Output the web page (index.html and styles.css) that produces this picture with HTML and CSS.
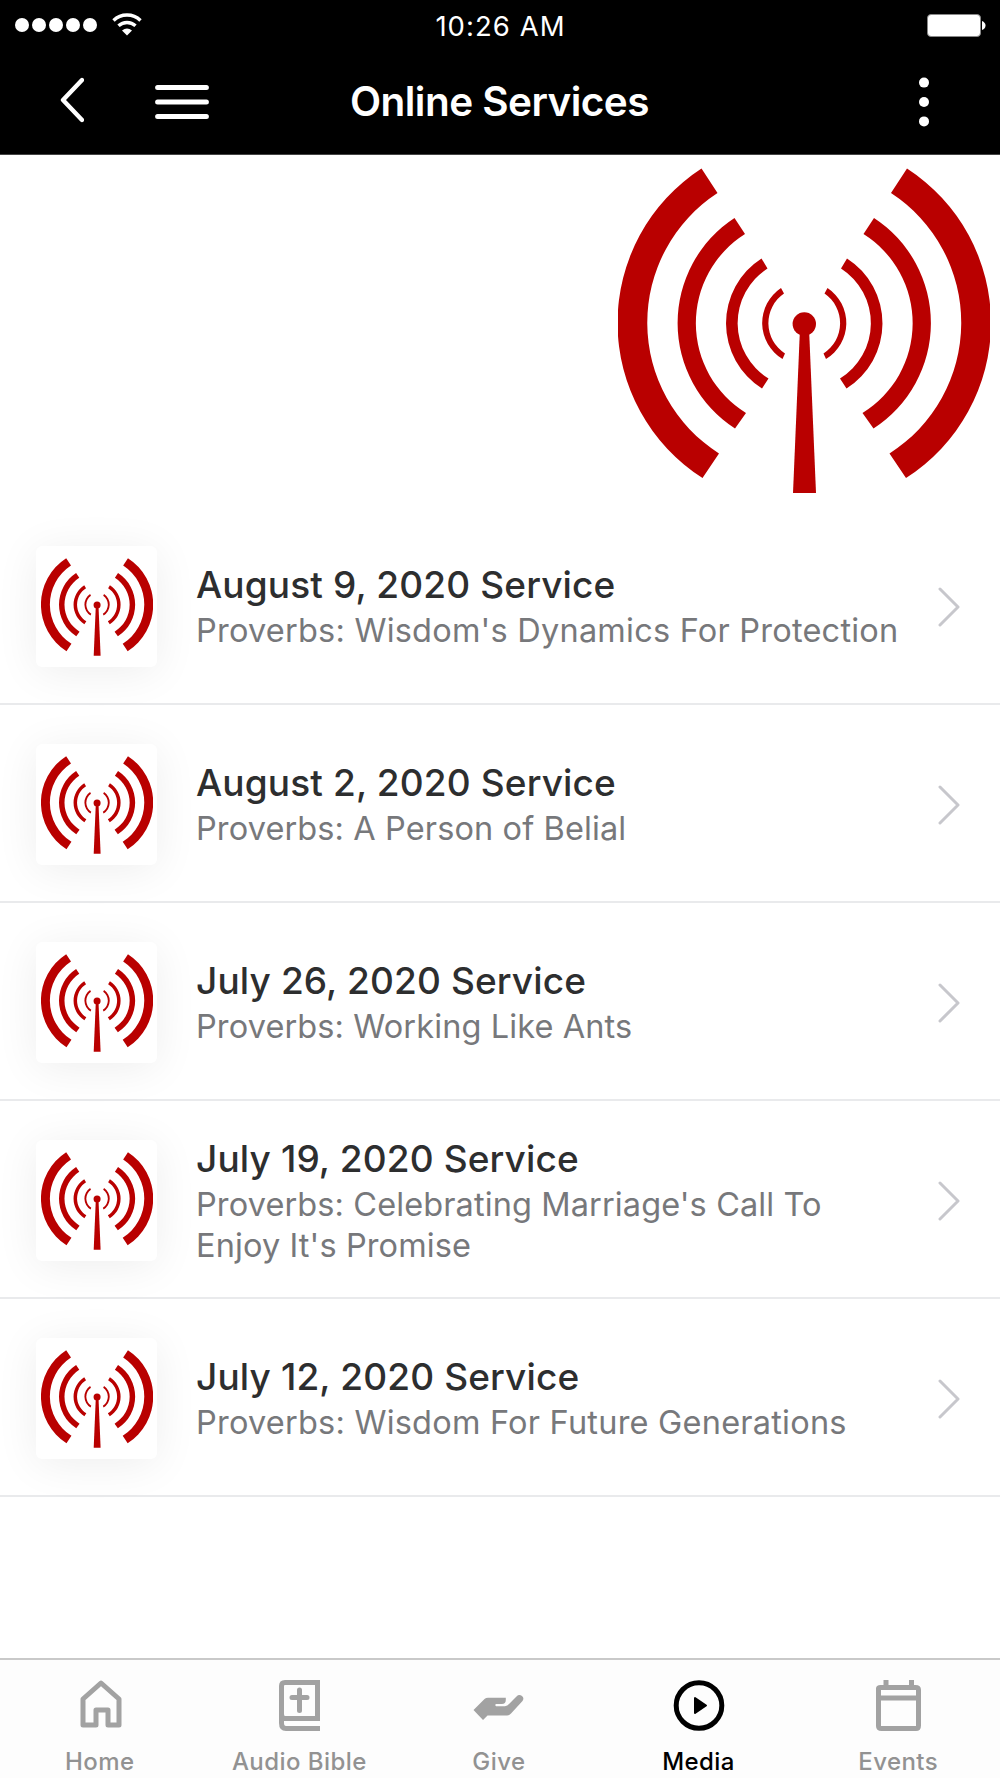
FILE: index.html
```html
<!DOCTYPE html>
<html lang="en">
<head>
<meta charset="utf-8">
<title>Online Services</title>
<link rel="stylesheet" href="styles.css">
</head>
<body>
<svg class="defs" width="0" height="0" aria-hidden="true">
  <symbol id="antenna" viewBox="0 0 372 326">
    <g id="waves-left">
      <path d="M83.500 0.500A184 184 0 0 0 84.500 310L101 285.500A155 155 0 0 1 99.500 25Z"/>
      <path d="M116.500 50A125.500 125.500 0 0 0 117 260.500L128 245A105.500 105.500 0 0 1 127 66Z"/>
      <path d="M143.500 90.500A77 77 0 0 0 144 220.500L150.500 210.500A65 65 0 0 1 149.500 100.500Z"/>
      <path d="M163 120A42 42 0 0 0 164.500 191L167 185.500A36 36 0 0 1 166 125.500Z"/>
    </g>
    <use href="#waves-left" transform="matrix(-1 0 0 1 372.500 0)"/>
    <circle cx="186.300" cy="156" r="11.700"/>
    <path d="M182 160H191L198 325H175Z"/>
  </symbol>
</svg>
<div class="screen">
  <header class="top">
    <div class="status">
      <div class="signal">
        <i></i><i></i><i></i><i></i><i></i>
        <svg class="wifi" width="30" height="24" viewBox="0 0 30 24"><path d="M1.500 7.500A19.500 19.500 0 0 1 28.500 7.500M6.500 12.800A12.500 12.500 0 0 1 23.500 12.800" fill="none" stroke="#fff" stroke-width="3.400"/><path d="M10 17.500Q15 13.500 20 17.500L15 22.500Z" fill="#fff"/></svg>
      </div>
      <div class="time">10:26 AM</div>
      <div class="battery"><b></b><svg width="4" height="9" viewBox="0 0 4 9"><path d="M0 0Q3.500 1.500 3.500 4.500T0 9Z" fill="#fff"/></svg></div>
    </div>
    <nav class="nav">
      <div class="nav-left">
        <svg class="back" width="26" height="46" viewBox="0 0 26 46"><path d="M24 3L5 23L24 43" fill="none" stroke="#fff" stroke-width="4.400" stroke-linecap="round" stroke-linejoin="round"/></svg>
        <svg class="burger" width="54" height="36" viewBox="0 0 54 36"><path d="M2.600 3.500H51.400M2.600 18H51.400M2.600 32.500H51.400" stroke="#fff" stroke-width="5" stroke-linecap="round"/></svg>
      </div>
      <h1>Online Services</h1>
      <div class="nav-right"><svg width="10" height="50" viewBox="0 0 10 50"><g fill="#fff"><circle cx="5" cy="5.600" r="5"/><circle cx="5" cy="25" r="5"/><circle cx="5" cy="44.400" r="5"/></g></svg></div>
    </nav>
  </header>
  <div class="hero"><svg class="antenna-large"><use href="#antenna"/></svg></div>
  <main class="list">
    <article class="row"><div class="thumb"><svg><use href="#antenna"/></svg></div><div class="copy"><h2>August 9, 2020 Service</h2><p class="wide">Proverbs: Wisdom's Dynamics For Protection</p></div><svg class="chevron" viewBox="0 0 22 40"><path d="M2 2L20 20L2 38"/></svg></article>
    <article class="row"><div class="thumb"><svg><use href="#antenna"/></svg></div><div class="copy"><h2>August 2, 2020 Service</h2><p>Proverbs: A Person of Belial</p></div><svg class="chevron" viewBox="0 0 22 40"><path d="M2 2L20 20L2 38"/></svg></article>
    <article class="row"><div class="thumb"><svg><use href="#antenna"/></svg></div><div class="copy"><h2>July 26, 2020 Service</h2><p>Proverbs: Working Like Ants</p></div><svg class="chevron" viewBox="0 0 22 40"><path d="M2 2L20 20L2 38"/></svg></article>
    <article class="row"><div class="thumb"><svg><use href="#antenna"/></svg></div><div class="copy"><h2>July 19, 2020 Service</h2><p>Proverbs: Celebrating Marriage's Call To<br>Enjoy It's Promise</p></div><svg class="chevron" viewBox="0 0 22 40"><path d="M2 2L20 20L2 38"/></svg></article>
    <article class="row"><div class="thumb"><svg><use href="#antenna"/></svg></div><div class="copy"><h2>July 12, 2020 Service</h2><p class="wide">Proverbs: Wisdom For Future Generations</p></div><svg class="chevron" viewBox="0 0 22 40"><path d="M2 2L20 20L2 38"/></svg></article>
  </main>
  <footer class="tabs">
    <div class="tab"><svg width="60" height="60" viewBox="0 0 60 60"><path d="M13 49V23L31 7L49 23V49H38V34H26V49Z" fill="none" stroke="#a2a2a2" stroke-width="5" stroke-linejoin="round"/></svg><span>Home</span></div>
    <div class="tab"><svg width="60" height="60" viewBox="0 0 60 60"><path d="M51 42.500H16Q12.500 42.500 12.500 38V10Q12.500 6.500 16 6.500H48.500V42.500M12.500 38V47Q12.500 52.500 17 52.500H51" fill="none" stroke="#a2a2a2" stroke-width="5"/><path d="M30.500 14V34.500M23 21.500H38" stroke="#a2a2a2" stroke-width="5" stroke-linecap="round"/></svg><span>Audio Bible</span></div>
    <div class="tab"><svg width="60" height="60" viewBox="0 0 60 60"><path d="M4.500 34L15.500 23Q17 21.700 19 21.700H36.800V24Q36.800 28 32.800 28H27Q25.500 29 27 30.200H36Q38.500 30 40 28L47.500 20.500Q50 18 53 20Q55.500 22 53.500 25L42 37.500Q40 39.500 38 39.500H18.500L14 44Z" fill="#a2a2a2"/></svg><span>Give</span></div>
    <div class="tab active"><svg width="60" height="60" viewBox="0 0 60 60"><circle cx="30" cy="29.500" r="22.800" fill="none" stroke="#000" stroke-width="5"/><path d="M26 22V37L37 29.500Z" stroke="#000" stroke-width="2" stroke-linejoin="round"/></svg><span>Media</span></div>
    <div class="tab"><svg width="60" height="60" viewBox="0 0 60 60"><path d="M10.500 12.500Q10.500 11.500 12.500 11.500H47.500Q50.500 11.500 50.500 14V49.500Q50.500 52.500 48 52.500H13.500Q10.500 52.500 10.500 50ZM10.500 22H50.500M18 4V12M43.500 4V12" fill="none" stroke="#a2a2a2" stroke-width="5"/></svg><span>Events</span></div>
  </footer>
</div>
</body>
</html>
```
FILE: styles.css
```css
* { box-sizing: border-box; }
body { margin: 0; background: #fff; font-family: Inter, "Liberation Sans", sans-serif; }
h1, h2, p { margin: 0; }
svg { display: block; flex: none; }
.defs { position: absolute; }
.screen { width: 1000px; height: 1778px; display: flex; flex-direction: column; overflow: hidden; background: #fff; }
.top { height: 155px; flex: none; background: #000; color: #fff; border-bottom: 1px solid #444; }
.status { height: 50px; display: grid; grid-template-columns: 1fr auto 1fr; padding: 0 14px 0 15px; align-items: center; }
.signal { display: flex; align-items: center; gap: 3px; }
.signal i { width: 14px; height: 14px; border-radius: 50%; background: #fff; }
.wifi { margin-left: 12px; }
.time { font-size: 27.500px; line-height: 48px; padding-top: 2px; letter-spacing: 1.050px; }
.battery { display: flex; justify-content: flex-end; align-items: center; gap: 1px; }
.battery b { width: 54px; height: 23px; background: #fff; border: 1px solid #888; border-radius: 4px; }
.nav { height: 103px; display: grid; grid-template-columns: 1fr auto 1fr; align-items: center; padding: 0 59px 0 58px; }
.nav-left, .nav-right { display: flex; align-items: center; height: 103px; }
.back { margin-bottom: 3px; }
.burger { margin-left: 71px; }
.nav h1 { font-size: 40.500px; line-height: 103px; font-weight: 600; letter-spacing: -0.550px; }
.nav-right { justify-content: flex-end; padding-right: 12px; }
.hero { height: 352px; flex: none; display: flex; justify-content: flex-end; align-items: flex-start; padding: 13px 10px 0 0; }
.antenna-large { width: 372px; height: 326px; fill: #b90000; }
.row { height: 198px; display: flex; align-items: center; padding: 3px 40px 0 36px; border-bottom: 2px solid #e9eaec; }
.thumb { width: 121px; height: 121px; flex: none; display: flex; justify-content: center; padding-top: 12px; background: #fff; border-radius: 6px; box-shadow: 0 5px 44px rgba(0, 0, 0, 0.07); }
.thumb svg { width: 112px; height: 98px; fill: #b90000; }
.copy { flex: 1; padding: 0 0 0 39px; }
.copy h2 { font-size: 37px; line-height: 47px; font-weight: 500; letter-spacing: 0.130px; color: #2d2e2f; white-space: nowrap; }
.copy p { margin-top: 3px; font-size: 32.500px; line-height: 40.300px; letter-spacing: 0.110px; color: #77787b; white-space: nowrap; }
.copy .wide { letter-spacing: 0.220px; }
.chevron { width: 22px; height: 40px; margin-top: 1px; fill: none; stroke: #c7c7cc; stroke-width: 3; stroke-linecap: round; stroke-linejoin: round; }
.tabs { margin-top: auto; height: 120px; flex: none; display: grid; grid-template-columns: repeat(5, 199.600px); border-top: 2px solid #c9c9c9; background: #fdfdfd; }
.tab { display: flex; flex-direction: column; align-items: center; padding-top: 16px; color: #929292; font-size: 24px; font-weight: 500; letter-spacing: 0.450px; }
.tab span { line-height: 30px; margin-top: 11px; }
.active { color: #000; }
```
